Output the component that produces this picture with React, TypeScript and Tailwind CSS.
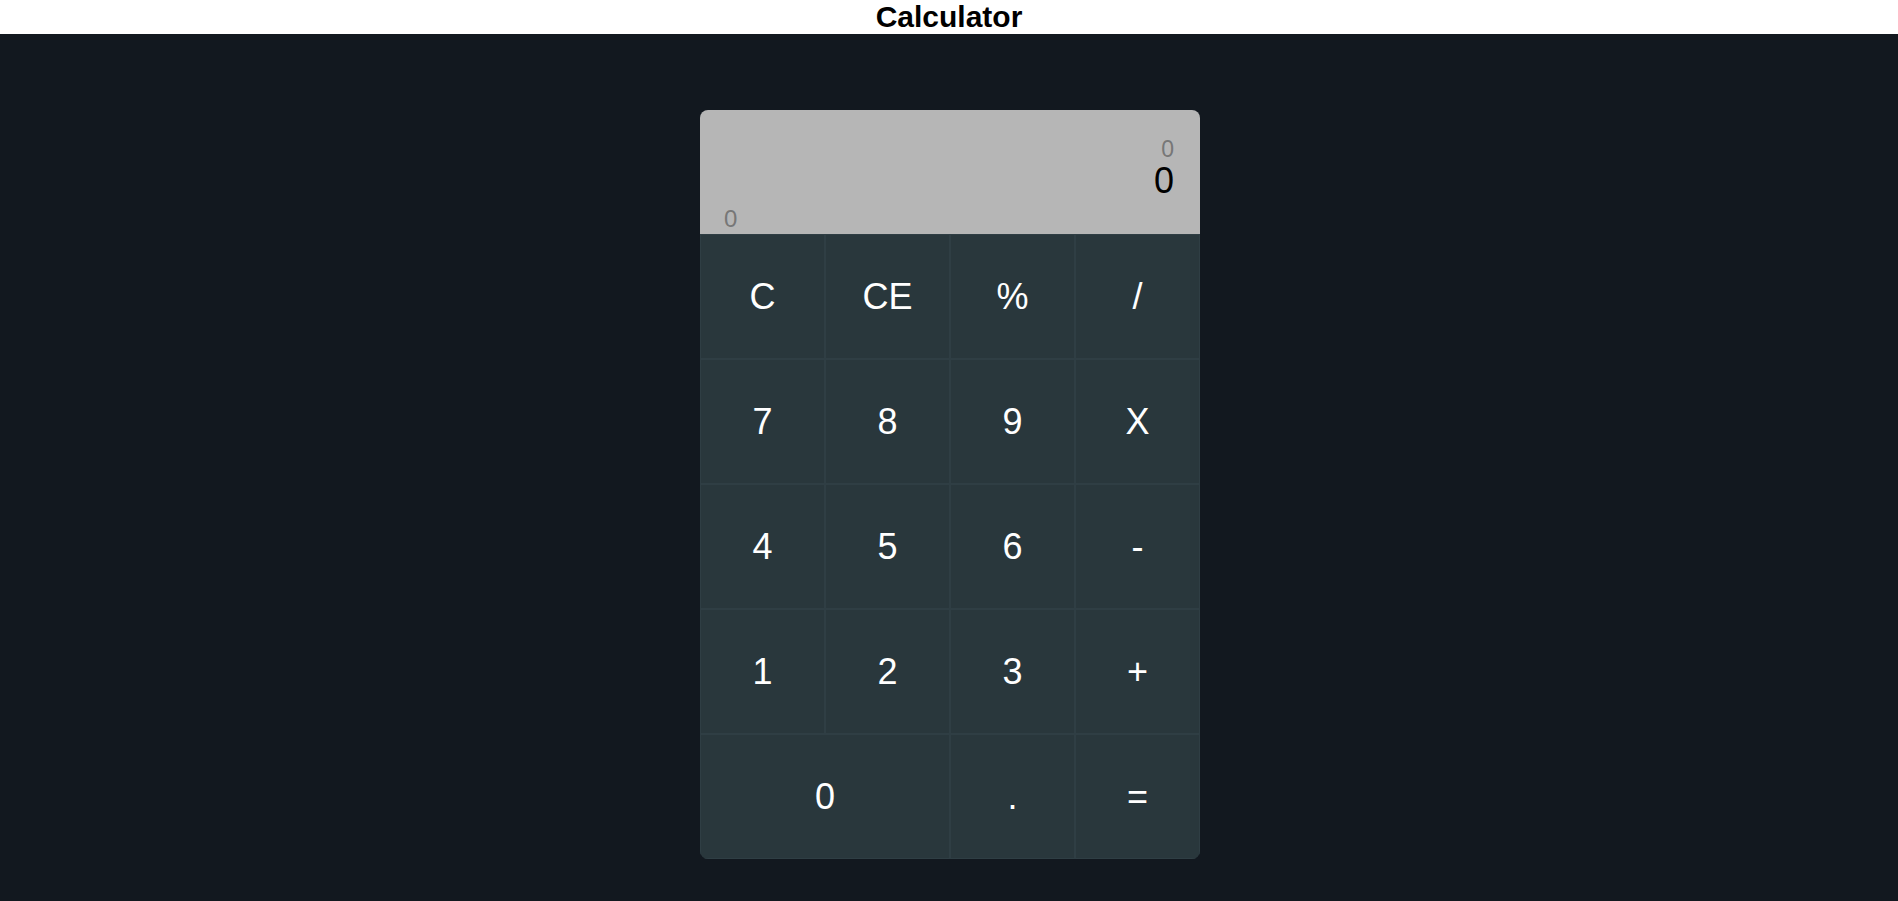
import React, { useState } from "react";

const keys: { label: string; wide?: boolean }[] = [
  { label: "C" },
  { label: "CE" },
  { label: "%" },
  { label: "/" },
  { label: "7" },
  { label: "8" },
  { label: "9" },
  { label: "X" },
  { label: "4" },
  { label: "5" },
  { label: "6" },
  { label: "-" },
  { label: "1" },
  { label: "2" },
  { label: "3" },
  { label: "+" },
  { label: "0", wide: true },
  { label: "." },
  { label: "=" },
];

export default function App() {
  const [current] = useState("0");
  const [previous] = useState("0");
  const [memory] = useState("0");

  return (
    <div className="flex min-h-screen flex-col font-['Liberation_Sans',Arial,sans-serif]">
      <h1 className="bg-white text-center text-[30px] font-bold leading-[34px] text-black">
        Calculator
      </h1>

      <main className="flex flex-1 justify-center bg-[#12181f] pl-[2px] pt-[76px]">
        <div className="w-[500px] self-start overflow-hidden rounded-lg">
          {/* display */}
          <div className="relative flex h-[124px] flex-col items-end bg-[#b6b6b6] pr-[26px] pt-[28px]">
            <div className="text-[23px] leading-[23px] text-[#777]">{previous}</div>
            <div className="mt-[2px] text-[36px] leading-[36px] text-black">{current}</div>
            <div className="absolute bottom-[3px] left-[24px] text-[24px] leading-[24px] text-[#777]">
              {memory}
            </div>
          </div>

          {/* keypad */}
          <div className="grid auto-rows-[125px] grid-cols-4 bg-[#29373c]">
            {keys.map((k) => (
              <button
                key={k.label + (k.wide ? "w" : "")}
                className={`flex items-center justify-center border-[0.5px] border-[#2f3e44] text-[36px] text-white ${
                  k.wide ? "col-span-2" : ""
                }`}
              >
                {k.label}
              </button>
            ))}
          </div>
        </div>
      </main>
    </div>
  );
}
